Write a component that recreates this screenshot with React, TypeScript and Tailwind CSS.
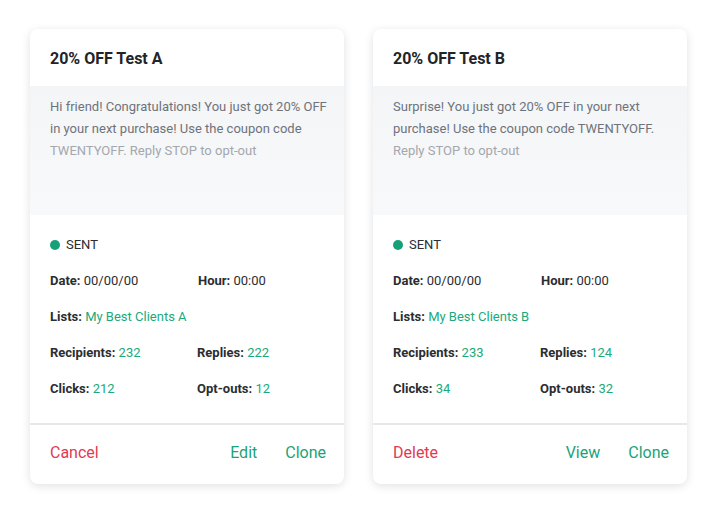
import React from "react";

type Card = {
  title: string;
  lines: string[];
  list: string;
  recipients: string;
  replies: string;
  clicks: string;
  optouts: string;
  left: string;
  mid: string;
};

const cards: Card[] = [
  {
    title: "20% OFF Test A",
    lines: [
      "Hi friend! Congratulations! You just got 20% OFF",
      "in your next purchase! Use the coupon code",
      "TWENTYOFF. Reply STOP to opt-out",
    ],
    list: "My Best Clients A",
    recipients: "232",
    replies: "222",
    clicks: "212",
    optouts: "12",
    left: "Cancel",
    mid: "Edit",
  },
  {
    title: "20% OFF Test B",
    lines: [
      "Surprise! You just got 20% OFF in your next",
      "purchase! Use the coupon code TWENTYOFF.",
      "Reply STOP to opt-out",
    ],
    list: "My Best Clients B",
    recipients: "233",
    replies: "124",
    clicks: "34",
    optouts: "32",
    left: "Delete",
    mid: "View",
  },
];

function Field({ label, value, green }: { label: string; value: string; green?: boolean }) {
  return (
    <div className="text-[13px] leading-5 whitespace-nowrap">
      <span className="font-bold text-[#2b2d31]">{label}:</span>{" "}
      <span className={green ? "text-[#1aa97c]" : "text-[#2b2d31]"}>{value}</span>
    </div>
  );
}

function CampaignCard({ c }: { c: Card }) {
  return (
    <div className="w-[314px] h-[455px] bg-white rounded-lg shadow-[0_2px_10px_rgba(0,0,0,0.12)] flex flex-col overflow-hidden">
      <div className="h-[57px] flex items-center px-5 pt-[2px] shrink-0">
        <h2 className="text-[16px] font-bold text-[#222428]">{c.title}</h2>
      </div>
      <div className="h-[129px] shrink-0 bg-gradient-to-b from-[#f4f5f7] to-[#f8f9fa] px-5 pt-[10px]">
        {c.lines.map((l, i) => (
          <div
            key={i}
            className={
              "text-[13px] leading-[22px] whitespace-nowrap " +
              (i === 2 ? "text-[#a3a7ae]" : "text-[#6e737b]")
            }
          >
            {l}
          </div>
        ))}
      </div>
      <div className="flex-1 px-5 pt-3">
        <div className="h-9 flex items-center gap-[6px]">
          <span className="w-[10px] h-[10px] rounded-full bg-[#17a078]" />
          <span className="text-[13px] text-[#2b2d31]">SENT</span>
        </div>
        <div className="h-9 grid grid-cols-[148px_1fr] items-center">
          <Field label="Date" value="00/00/00" />
          <Field label="Hour" value="00:00" />
        </div>
        <div className="h-9 flex items-center">
          <Field label="Lists" value={c.list} green />
        </div>
        <div className="h-9 grid grid-cols-[147px_1fr] items-center">
          <Field label="Recipients" value={c.recipients} green />
          <Field label="Replies" value={c.replies} green />
        </div>
        <div className="h-9 grid grid-cols-[147px_1fr] items-center">
          <Field label="Clicks" value={c.clicks} green />
          <Field label="Opt-outs" value={c.optouts} green />
        </div>
      </div>
      <div className="h-[2px] bg-[#e6e8eb] shrink-0" />
      <div className="h-[59px] shrink-0 flex items-center pl-5 pr-[18px] pb-1 text-[16px]">
        <button className="text-[#e23a50]">{c.left}</button>
        <div className="ml-auto flex gap-7">
          <button className="text-[#1aa37a]">{c.mid}</button>
          <button className="text-[#1aa37a]">Clone</button>
        </div>
      </div>
    </div>
  );
}

export default function App() {
  return (
    <div
      className="w-[717px] h-[513px] bg-white flex gap-[29px] pl-[30px] pt-[29px]"
      style={{ fontFamily: "Roboto, 'Liberation Sans', sans-serif" }}
    >
      {cards.map((c) => (
        <CampaignCard key={c.title} c={c} />
      ))}
    </div>
  );
}
